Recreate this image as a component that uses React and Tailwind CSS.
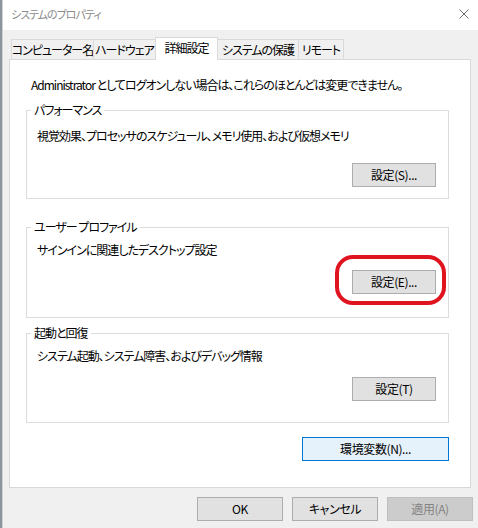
const font = "font-['Noto_Sans_CJK_JP','Noto_Sans',sans-serif] [font-feature-settings:'palt'] tracking-[-1px]";

const Button = ({ children, className = '' }) => (
  <div
    className={`h-[24px] flex items-center justify-center border text-[12px] leading-none tracking-[-0.4px] ${className}`}
  >
    {children}
  </div>
);

const Group = ({ label, text, button, height, pt, mt, children }) => (
  <div className={`relative border border-[#dcdcdc] flex flex-col pl-[10px] ${height} ${pt}`}>
    <span className="absolute -top-[9px] left-[4px] bg-white px-[3px] text-[12px] leading-[16px]">
      {label}
    </span>
    <p className="text-[12px] leading-[16px]">{text}</p>
    <Button className={`self-end mr-[12px] w-[84px] bg-[#e1e1e1] border-[#adadad] ${mt}`}>
      {button}
    </Button>
    {children}
  </div>
);

const tabs = ['コンピューター名', 'ハードウェア', '詳細設定', 'システムの保護', 'リモート'];
const tabWidths = ['w-[83px]', 'w-[63px]', 'w-[63px]', 'w-[82px]', 'w-[46px]'];

export default function App() {
  return (
    <div className={`w-[478px] h-[528px] flex bg-[#f0f0f0] text-black ${font}`}>
      {/* edge of the window behind */}
      <div className="w-[3px] shrink-0 bg-[#8c949c] border-r border-[#d2d2d2]" />

      <div className="flex-1 flex flex-col">
        {/* title bar */}
        <div className="h-[30px] bg-white flex items-center justify-between pl-[8px] pr-[8px]">
          <span className="text-[11px] text-[#8a8a8a] -mt-[2px]">システムのプロパティ</span>
          <svg width="10" height="10" viewBox="0 0 10 10" className="mr-[1px] -mt-[2px]">
            <path d="M0.5 0.5 L9.5 9.5 M9.5 0.5 L0.5 9.5" stroke="#707070" strokeWidth="1" />
          </svg>
        </div>

        {/* tabs */}
        <div className="flex items-end ml-[8px] mt-[7px] -mb-px relative z-10">
          {tabs.map((t, i) => {
            const active = i === 2;
            return (
              <div
                key={t}
                className={`${tabWidths[i]} ${i > 0 ? '-ml-px' : ''} flex items-center justify-center whitespace-nowrap border border-[#d9d9d9] text-[12px] ${
                  active
                    ? 'h-[23px] bg-white border-b-0 relative z-10 pb-[2px]'
                    : 'h-[21px] bg-[#f0f0f0]'
                }`}
              >
                {t}
              </div>
            );
          })}
        </div>

        {/* tab panel */}
        <div className="ml-[6px] w-[462px] h-[429px] bg-white border border-[#d9d9d9] flex flex-col pl-[16px] pr-[21px] pt-[17px]">
          <p className="ml-[5px] text-[12px] leading-[16px]">
            Administrator としてログオンしない場合は、これらのほとんどは変更できません。
          </p>

          <div className="mt-[17px]">
            <Group
              label="パフォーマンス"
              text="視覚効果、プロセッサのスケジュール、メモリ使用、および仮想メモリ"
              button="設定(S)..."
              height="h-[89px]"
              pt="pt-[17px]"
              mt="mt-[19px]"
            />
          </div>

          <div className="mt-[28px]">
            <Group
              label="ユーザー プロファイル"
              text="サインインに関連したデスクトップ設定"
              button="設定(E)..."
              height="h-[91px]"
              pt="pt-[14px]"
              mt="mt-[12px]"
            >
              {/* red marker */}
              <div className="absolute left-[308px] top-[27px] w-[111px] h-[50px] border-[4px] border-[#e0141e] rounded-[18px]" />
            </Group>
          </div>

          <div className="mt-[15px]">
            <Group
              label="起動と回復"
              text="システム起動、システム障害、およびデバッグ情報"
              button="設定(T)"
              height="h-[90px]"
              pt="pt-[14px]"
              mt="mt-[13px]"
            />
          </div>

          <Button className="self-end mt-[14px] w-[147px] bg-[#e5f1fb] border-[#0078d7]">
            環境変数(N)...
          </Button>
        </div>

        {/* dialog buttons */}
        <div className="flex justify-end gap-[9px] mt-[9px] pr-[5px]">
          <Button className="w-[86px] bg-[#e1e1e1] border-[#adadad]">OK</Button>
          <Button className="w-[86px] bg-[#e1e1e1] border-[#adadad]">キャンセル</Button>
          <Button className="w-[86px] bg-[#cccccc] border-[#bfbfbf] text-[#838383]">適用(A)</Button>
        </div>
      </div>
    </div>
  );
}
